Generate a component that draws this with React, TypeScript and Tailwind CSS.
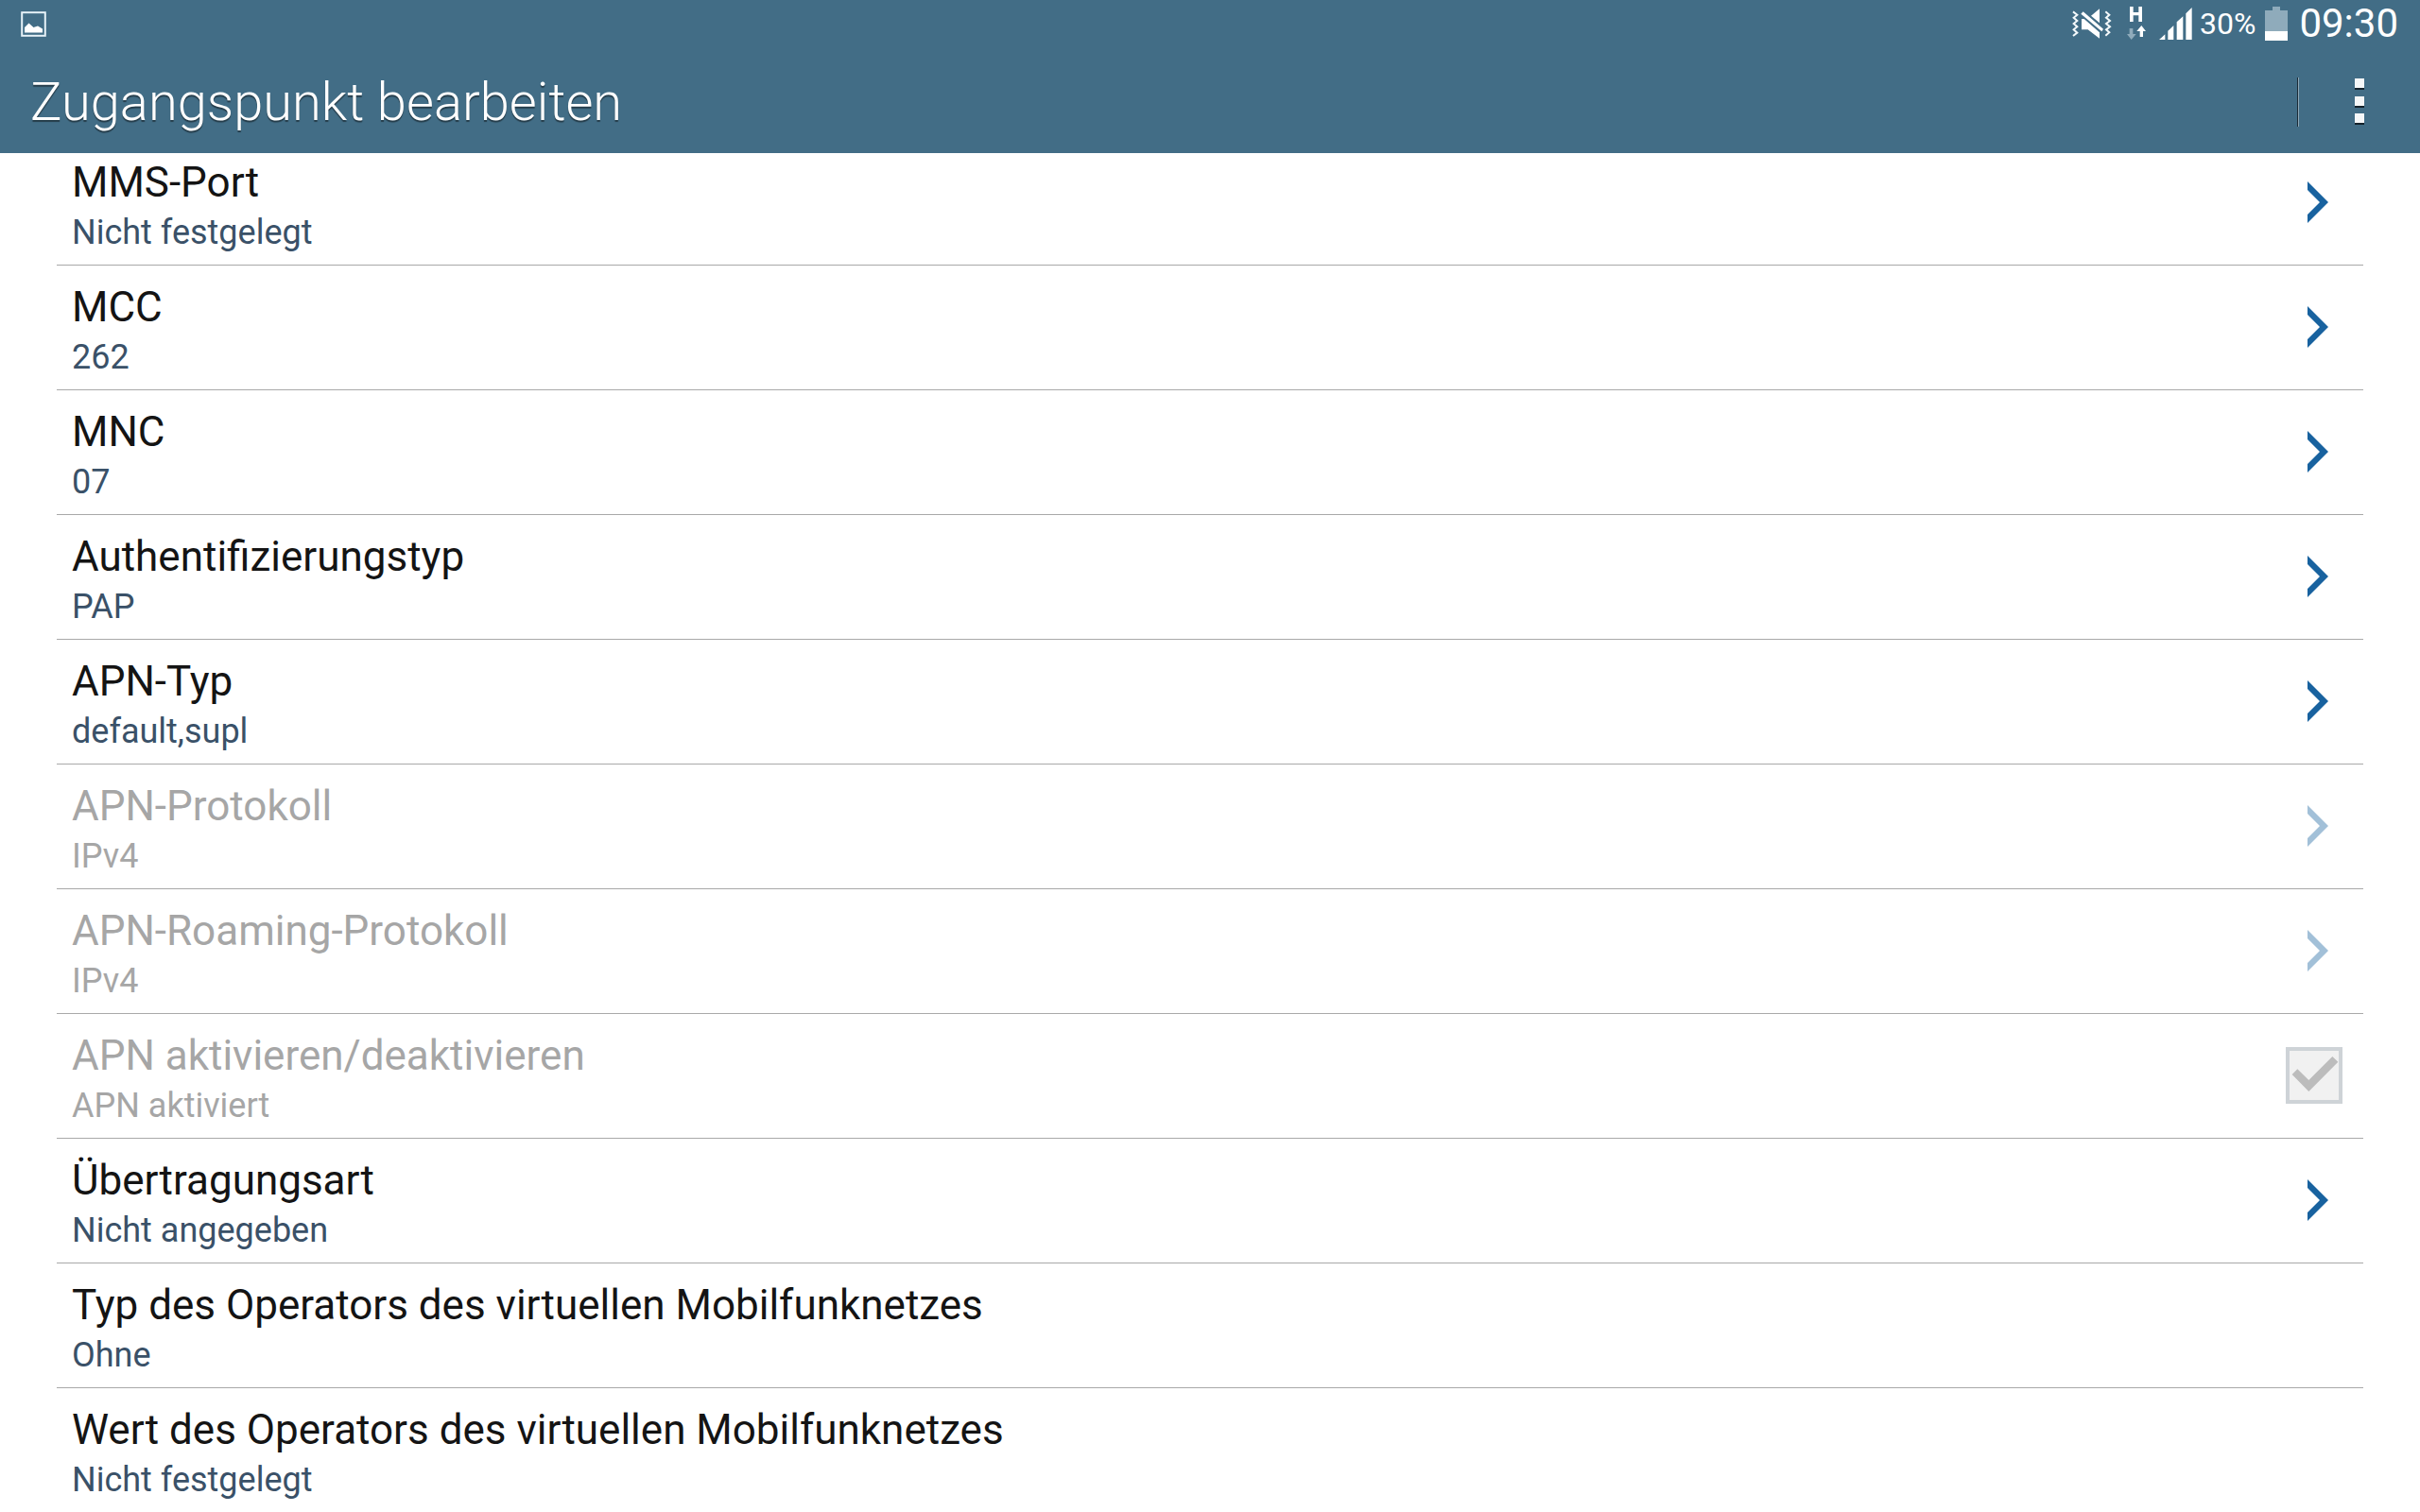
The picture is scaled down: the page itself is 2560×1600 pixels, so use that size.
import clsx from "clsx";

interface ApnSetting {
  id: string;
  title: string;
  summary: string;
  disabled?: boolean;
  control: "arrow" | "checkbox" | "none";
}

const settings: ApnSetting[] = [
  { id: "mms-port", title: "MMS-Port", summary: "Nicht festgelegt", control: "arrow" },
  { id: "mcc", title: "MCC", summary: "262", control: "arrow" },
  { id: "mnc", title: "MNC", summary: "07", control: "arrow" },
  { id: "auth", title: "Authentifizierungstyp", summary: "PAP", control: "arrow" },
  { id: "apn-type", title: "APN-Typ", summary: "default,supl", control: "arrow" },
  { id: "apn-protocol", title: "APN-Protokoll", summary: "IPv4", disabled: true, control: "arrow" },
  { id: "apn-roaming", title: "APN-Roaming-Protokoll", summary: "IPv4", disabled: true, control: "arrow" },
  { id: "apn-enabled", title: "APN aktivieren/deaktivieren", summary: "APN aktiviert", disabled: true, control: "checkbox" },
  { id: "bearer", title: "Übertragungsart", summary: "Nicht angegeben", control: "arrow" },
  { id: "mvno-type", title: "Typ des Operators des virtuellen Mobilfunknetzes", summary: "Ohne", control: "none" },
  { id: "mvno-value", title: "Wert des Operators des virtuellen Mobilfunknetzes", summary: "Nicht festgelegt", control: "none" },
];

function PictureIcon() {
  return (
    <svg className="h-[27px] w-[27px]" viewBox="0 0 27 27">
      <rect x="1.2" y="1.2" width="24.6" height="24.6" fill="none" stroke="#e6f2f8" strokeWidth="2" />
      <path d="M4 22.5V17l4.500-4.500 5 4.500 4.500-1.500 5 3v4z" fill="#fff" />
    </svg>
  );
}

function VibrateIcon() {
  return (
    <svg className="h-8 w-[42px]" viewBox="0 0 126 96">
      <g fill="none" stroke="#f4f9fb" strokeWidth="6">
        <path d="M3 10l13 10-11 9 11 10-11 9 11 10-11 9 11 10-13 10" />
        <path d="M106 10l12 10-10 9 12 10-12 9 12 10-12 9 10 9-12 10" />
      </g>
      <g fill="#fff">
        <path d="M35 10l64 55-5 8-66-56z" />
        <path d="M60 23l27-22v45z" />
        <path d="M30 33h8l49 43v19L50 67H30z" />
      </g>
    </svg>
  );
}

function HsdpaIcon() {
  return (
    <svg className="h-9 w-[22px]" viewBox="0 0 66 108">
      <path d="M9 0h11v18h17V0h11v48H37V28H20v20H9z" fill="#fff" />
      <path d="M8 69h11v18h10L14 105 0 87h8z" fill="#8fabbb" />
      <path d="M46 60l14 18h-9v18H41V78H31z" fill="#fff" />
    </svg>
  );
}

function SignalIcon() {
  return (
    <svg className="h-[34px] w-[35px]" viewBox="0 0 105 102" fill="#fff">
      <path d="M0 102l19-17v17zM28 102V74l18-17v45zM56 102V46l20-18v74zM85 102V19l19-19v102z" />
    </svg>
  );
}

function BatteryIcon() {
  return (
    <svg className="h-9 w-6" viewBox="0 0 24 36">
      <path d="M8 0h8v4h8v22H0V4h8z" fill="#8fabbb" />
      <path d="M0 26h24v10H0z" fill="#fff" />
    </svg>
  );
}

function StatusBar() {
  return (
    <div className="flex h-[50px] items-center justify-between pr-[23px] pl-[22px] text-white">
      <PictureIcon />
      <div className="flex items-center">
        <VibrateIcon />
        <span className="ml-4">
          <HsdpaIcon />
        </span>
        <span className="ml-3">
          <SignalIcon />
        </span>
        <span className="ml-2 text-[32px] leading-[50px]">30%</span>
        <span className="ml-[10px]">
          <BatteryIcon />
        </span>
        <span className="ml-3 text-[42px] leading-[50px]">09:30</span>
      </div>
    </div>
  );
}

function ActionBar() {
  return (
    <div className="flex h-28 items-center justify-between pt-[3px] pl-8">
      <h1 className="text-[56px] leading-[64px] font-light text-white [text-shadow:0_2px_1px_rgba(0,0,0,0.45)]">
        Zugangspunkt bearbeiten
      </h1>
      <div className="flex items-center">
        <span className="h-[52px] w-[2px] border-l border-[#1b2b36] bg-[#8fa9b8]" />
        <button type="button" aria-label="Weitere Optionen" className="flex h-[100px] w-[128px] items-center justify-center">
          <svg className="h-[50px] w-[10px]" viewBox="0 0 10 50">
            {[0, 19, 37].map((y) => (
              <g key={y}>
                <rect y={y} width="10" height="12" fill="#14222b" />
                <rect y={y} width="10" height="10" fill="#f5f7f8" />
              </g>
            ))}
          </svg>
        </button>
      </div>
    </div>
  );
}

function Chevron({ disabled }: { disabled?: boolean }) {
  return (
    <svg className={clsx("mr-[37px] h-[44px] w-[22px] shrink-0", disabled ? "text-[#a2c0d8]" : "text-[#18629f]")} viewBox="0 0 22 44">
      <path d="M0 0l22 22L0 44v-9l13-13L0 9z" fill="currentColor" />
    </svg>
  );
}

function SettingText({ setting }: { setting: ApnSetting }) {
  return (
    <span className="flex flex-col pt-2">
      <span className={clsx("text-[44px] leading-[56px]", setting.disabled ? "text-[#a6a6a6]" : "text-[#141414]")}>
        {setting.title}
      </span>
      <span className={clsx("text-[36px] leading-[50px]", setting.disabled ? "text-[#a6a6a6]" : "text-[#3a5168]")}>
        {setting.summary}
      </span>
    </span>
  );
}

function SettingRow({ setting }: { setting: ApnSetting }) {
  const rowClasses = "flex h-[131px] w-full items-center justify-between pb-[2px] pl-4 text-left";

  if (setting.control === "checkbox") {
    return (
      <label htmlFor={setting.id} className={rowClasses}>
        <SettingText setting={setting} />
        <span className="relative mr-[22px] h-[60px] w-[60px]">
          <input
            id={setting.id}
            type="checkbox"
            defaultChecked
            disabled
            className="block h-[60px] w-[60px] appearance-none border-4 border-[#ced3d7] bg-[#f1f1f1]"
          />
          <svg className="pointer-events-none absolute inset-0 h-[60px] w-[60px]" viewBox="0 0 180 180">
            <path d="M20 87l17-17 36 35 75-75 18 17-93 94z" fill="#bcbcbc" />
          </svg>
        </span>
      </label>
    );
  }

  return (
    <button type="button" disabled={setting.disabled} className={rowClasses}>
      <SettingText setting={setting} />
      {setting.control === "arrow" && <Chevron disabled={setting.disabled} />}
    </button>
  );
}

export default function App() {
  return (
    <div className="flex h-screen flex-col overflow-hidden bg-white font-[Roboto,sans-serif]">
      <header className="shrink-0 bg-[#426d86]">
        <StatusBar />
        <ActionBar />
      </header>
      <main className="min-h-0 flex-1 overflow-hidden px-[60px]">
        {/* list is scrolled, the first row sits partly under the header */}
        <ul className="-mt-[13px]">
          {settings.map((setting) => (
            <li key={setting.id} className="border-b border-[#a9a9a9]">
              <SettingRow setting={setting} />
            </li>
          ))}
        </ul>
      </main>
    </div>
  );
}
